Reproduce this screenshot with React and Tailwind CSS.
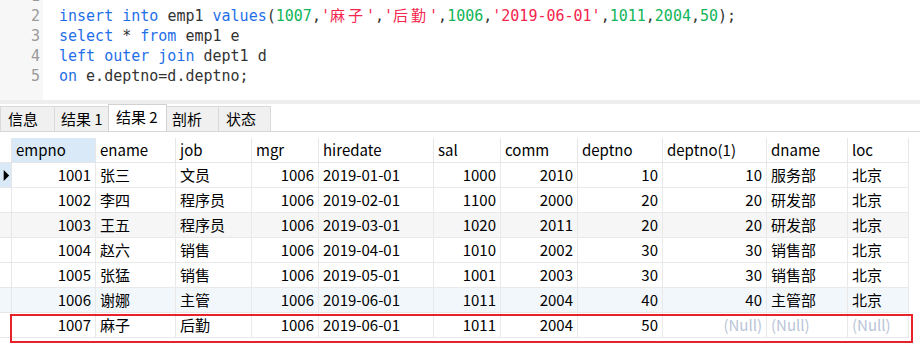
import React from "react";

const KW = "text-[#1f6fe8]";
const NUM = "text-[#12b559]";
const STR = "text-[#f5254e]";
const DEF = "text-[#333333]";

function Cjk({ children, cls }) {
  return <span className={"tracking-[3px] " + cls}>{children}</span>;
}

const codeLines = [
  null,
  (
    <>
      <span className={KW}>insert</span> <span className={KW}>into</span>{" "}
      <span className={DEF}>emp1</span> <span className={KW}>values</span>
      <span className={DEF}>(</span>
      <span className={NUM}>1007</span>
      <span className={DEF}>,</span>
      <span className={STR}>'</span>
      <Cjk cls={STR}>麻子</Cjk>
      <span className={STR}>'</span>
      <span className={DEF}>,</span>
      <span className={STR}>'</span>
      <Cjk cls={STR}>后勤</Cjk>
      <span className={STR}>'</span>
      <span className={DEF}>,</span>
      <span className={NUM}>1006</span>
      <span className={DEF}>,</span>
      <span className={STR}>'2019-06-01'</span>
      <span className={DEF}>,</span>
      <span className={NUM}>1011</span>
      <span className={DEF}>,</span>
      <span className={NUM}>2004</span>
      <span className={DEF}>,</span>
      <span className={NUM}>50</span>
      <span className={DEF}>);</span>
    </>
  ),
  (
    <>
      <span className={KW}>select</span> <span className={DEF}>*</span>{" "}
      <span className={KW}>from</span> <span className={DEF}>emp1 e</span>
    </>
  ),
  (
    <>
      <span className={KW}>left</span> <span className={KW}>outer</span>{" "}
      <span className={KW}>join</span> <span className={DEF}>dept1 d</span>
    </>
  ),
  (
    <>
      <span className={KW}>on</span> <span className={DEF}>e.deptno=d.deptno;</span>
    </>
  ),
];

const cols = [
  { name: "empno", w: "w-[84px]", right: true },
  { name: "ename", w: "w-[80px]" },
  { name: "job", w: "w-[76px]" },
  { name: "mgr", w: "w-[67px]", right: true },
  { name: "hiredate", w: "w-[115px]" },
  { name: "sal", w: "w-[67px]", right: true },
  { name: "comm", w: "w-[77px]", right: true },
  { name: "deptno", w: "w-[85px]", right: true },
  { name: "deptno(1)", w: "w-[104px]", right: true },
  { name: "dname", w: "w-[81px]" },
  { name: "loc", w: "w-[61px]" },
];

const rows = [
  { bg: "bg-white", d: ["1001", "张三", "文员", "1006", "2019-01-01", "1000", "2010", "10", "10", "服务部", "北京"] },
  { bg: "bg-white", d: ["1002", "李四", "程序员", "1006", "2019-02-01", "1100", "2000", "20", "20", "研发部", "北京"] },
  { bg: "bg-[#f6f6f6]", d: ["1003", "王五", "程序员", "1006", "2019-03-01", "1020", "2011", "20", "20", "研发部", "北京"] },
  { bg: "bg-white", d: ["1004", "赵六", "销售", "1006", "2019-04-01", "1010", "2002", "30", "30", "销售部", "北京"] },
  { bg: "bg-white", d: ["1005", "张猛", "销售", "1006", "2019-05-01", "1001", "2003", "30", "30", "销售部", "北京"] },
  { bg: "bg-[#f2f7fc]", d: ["1006", "谢娜", "主管", "1006", "2019-06-01", "1011", "2004", "40", "40", "主管部", "北京"] },
  { bg: "bg-white", d: ["1007", "麻子", "后勤", "1006", "2019-06-01", "1011", "2004", "50", null, null, null] },
];

const tabs = [
  { t: "信息", w: "w-[55px]", pl: "pl-[7px]" },
  { t: "结果 1", w: "w-[55px] ml-[-1px]", pl: "pl-[6px]" },
  { t: "结果 2", w: "w-[59px] ml-[-1px]", pl: "pl-[7px]", active: true },
  { t: "剖析", w: "w-[53px] ml-[-1px]", pl: "pl-[5px]" },
  { t: "状态", w: "w-[53px] ml-[-1px]", pl: "pl-[7px]" },
];

export default function App() {
  return (
    <div className="relative w-[920px] h-[354px] overflow-hidden bg-white font-['Noto_Sans_CJK_SC',sans-serif] text-black">
      {/* Editor */}
      <div className="flex h-[100px] overflow-hidden">
        <div className="w-[43px] bg-[#f7f7f7] flex flex-col mt-[-14px] pr-[3px] font-['DejaVu_Sans_Mono','Noto_Sans_CJK_SC',monospace] text-[15px] text-[#9a9a9a]">
          {codeLines.map((_, i) => (
            <div key={i} className="h-[20px] leading-[20px] text-right">
              {i + 1}
            </div>
          ))}
        </div>
        <div className="flex-1 flex flex-col mt-[-14px] pl-[16px] font-['DejaVu_Sans_Mono','Noto_Sans_CJK_SC',monospace] text-[15px] whitespace-pre">
          {codeLines.map((l, i) => (
            <div key={i} className="h-[20px] leading-[20px]">
              {l}
            </div>
          ))}
        </div>
      </div>
      {/* separator */}
      <div className="h-[4px] bg-[#eeeeee]" />
      {/* Tabs */}
      <div className="flex items-end h-[28px] border-b border-[#d6d6d6]">
        {tabs.map((t) => (
          <div
            key={t.t}
            className={
              "flex items-center text-[15px] border border-b-0 " +
              t.w +
              " " +
              t.pl +
              " " +
              (t.active
                ? "h-[27px] bg-white border-[#d2d2d2] relative z-10 pb-[2px]"
                : "h-[25px] bg-[#f0f0f0] border-[#d9d9d9]")
            }
          >
            {t.t}
          </div>
        ))}
      </div>
      {/* Grid */}
      <div className="mt-[6px] w-[909px] text-[15px]">
        <div className="flex h-[25px]">
          <div className="w-[12px] h-[25px] border-r border-b border-[#e6e6e6] bg-white" />
          {cols.map((c, i) => (
            <div
              key={c.name}
              className={
                c.w +
                " h-[25px] flex items-center px-[4px] border-r border-b border-[#e6e6e6] " +
                (i === 0 ? "bg-[#d9e9f8]" : "bg-white")
              }
            >
              {c.name}
            </div>
          ))}
        </div>
        {rows.map((r, ri) => (
          <div key={ri} className={"flex h-[25px] " + r.bg}>
            <div
              className={
                "w-[12px] h-[25px] border-r border-b border-[#e6e6e6] flex items-center " +
                (ri === 0 ? "bg-[#d9e9f8]" : "")
              }
            >
              {ri === 0 && (
                <svg width="12" height="25" viewBox="0 0 12 25">
                  <path d="M4 6.5 L10 12.5 L4 18.5 Z" fill="#000" />
                </svg>
              )}
            </div>
            {cols.map((c, ci) => {
              const v = r.d[ci];
              return (
                <div
                  key={ci}
                  className={
                    c.w +
                    " h-[25px] flex items-center px-[4px] border-r border-b border-[#e9e9e9] whitespace-nowrap " +
                    (c.right ? "justify-end" : "justify-start")
                  }
                >
                  {v === null ? <span className="text-[#b9c5d8]">(Null)</span> : v}
                </div>
              );
            })}
          </div>
        ))}
      </div>
      {/* red annotation box */}
      <div className="absolute left-[10px] top-[314px] w-[903px] h-[29px] border-2 border-[#e8222b]" />
    </div>
  );
}
